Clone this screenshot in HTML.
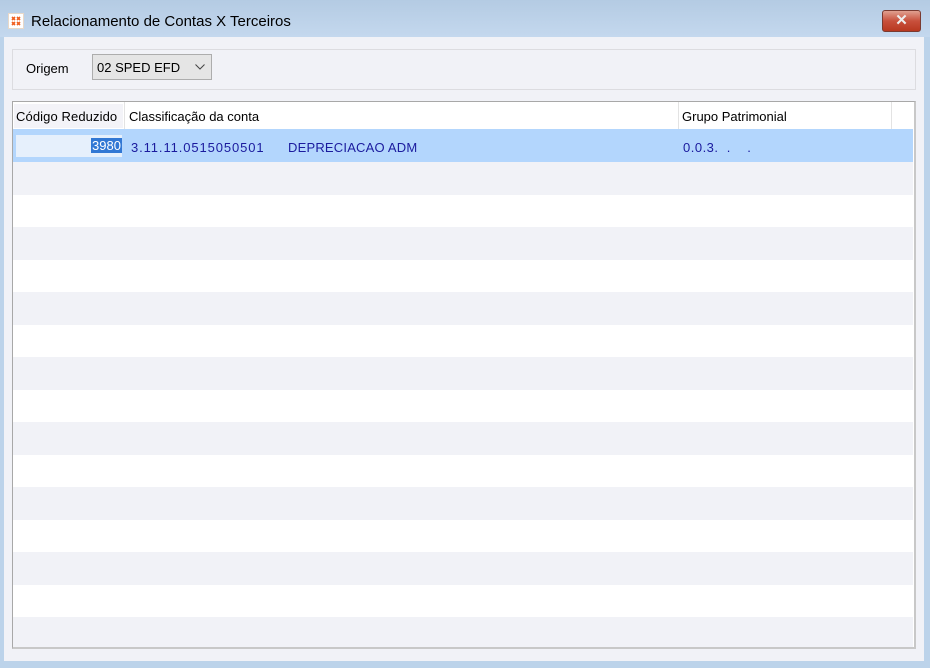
<!DOCTYPE html>
<html><head><meta charset="utf-8"><style>
*{margin:0;padding:0;box-sizing:border-box}
body{width:930px;height:668px;background:#bcd3ea;font-family:"Liberation Sans",sans-serif;font-size:13px;color:#000;position:relative;overflow:hidden}
.title{position:absolute;left:0;top:0;width:930px;height:37px;background:linear-gradient(#b4cbe3,#c4d8ee)}
.title .t{position:absolute;left:31px;top:13px;font-size:15px;color:#000}
.icon{position:absolute;left:8px;top:13px;width:16px;height:16px;background:#fff;border:1px solid #e8d8c8}
.close{position:absolute;left:882px;top:10px;width:39px;height:22px;border:1px solid #7a3a30;border-radius:3px;background:linear-gradient(#e0a090,#c8503c 50%,#b83820);color:#eee;font-size:15px;font-weight:bold;text-align:center;line-height:19px}
.client{position:absolute;left:4px;top:37px;width:920px;height:624px;background:#f1f2f7}
.grp{position:absolute;left:12px;top:49px;width:904px;height:41px;border:1px solid #dcdce0;background:#f1f2f7}
.lbl{position:absolute;left:26px;top:61px}
.combo{position:absolute;left:92px;top:54px;width:120px;height:26px;border:1px solid #adadad;background:#e5e5e5;padding:5px 0 0 4px}
.combo svg{position:absolute;right:6px;top:9px}
.grid{position:absolute;left:12px;top:101px;width:904px;height:548px;border:1px solid #a8a8a8;border-right:2px solid #c8c8c8;border-bottom:2px solid #c8c8c8;background:#fff;overflow:hidden}
.hdr{position:absolute;left:0;top:0;width:902px;height:27px;background:#fff}
.h{position:absolute;top:7px}
.vs{position:absolute;top:0;height:27px;width:1px;background:#e3e3e3}
.row{position:absolute;left:0;width:900px;height:33px}
.g{background:#f1f2f7}
.sel{background:#b3d6fd}
.cell{position:absolute;color:#1b1b9e}
</style></head><body>
<div class="title"><div class="icon"><svg width="14" height="14"><path d="M3 3l3 3M6 3l-3 3M8 3l3 3M11 3l-3 3M3 8l3 3M6 8l-3 3M8 8l3 3M11 8l-3 3" stroke="#f06020" stroke-width="1.6"/></svg></div><div class="t">Relacionamento de Contas X Terceiros</div><div class="close">✕</div></div>
<div class="client"></div>
<div class="grp"></div>
<div class="lbl">Origem</div>
<div class="combo">02 SPED EFD<svg width="10" height="6"><path d="M0.5 0.5l4.5 4.5 4.5-4.5" stroke="#444" fill="none"/></svg></div>
<div class="grid">
<div class="hdr">
<div style="position:absolute;left:1px;top:2px;width:109px;height:24px;background:#f3f3f8"></div>
<div class="h" style="left:3px;letter-spacing:0.1px">Código Reduzido</div>
<div class="vs" style="left:111px"></div>
<div class="h" style="left:116px">Classificação da conta</div>
<div class="vs" style="left:665px"></div>
<div class="h" style="left:669px">Grupo Patrimonial</div>
<div class="vs" style="left:878px"></div>
</div>
<div class="row sel" style="top:27px">
<div style="position:absolute;left:3px;top:6px;width:106px;height:22px;background:#e6f0fc"></div>
<div style="position:absolute;left:78px;top:9px;height:15px;background:#3278d4;color:#fff;padding:0 1px;line-height:15px">3980</div>
<div class="cell" style="left:118px;top:11px;letter-spacing:0.9px">3.11.11.0515050501</div>
<div class="cell" style="left:275px;top:11px;letter-spacing:0.2px">DEPRECIACAO ADM</div>
<div class="cell" style="left:670px;top:11px;letter-spacing:0.5px">0.0.3.&nbsp;&nbsp;.&nbsp;&nbsp;&nbsp;&nbsp;.</div>
</div>
<div class="row g" style="top:60px"></div>
<div class="row g" style="top:125px"></div>
<div class="row g" style="top:190px"></div>
<div class="row g" style="top:255px"></div>
<div class="row g" style="top:320px"></div>
<div class="row g" style="top:385px"></div>
<div class="row g" style="top:450px"></div>
<div class="row g" style="top:515px"></div>
</div>
</body></html>
